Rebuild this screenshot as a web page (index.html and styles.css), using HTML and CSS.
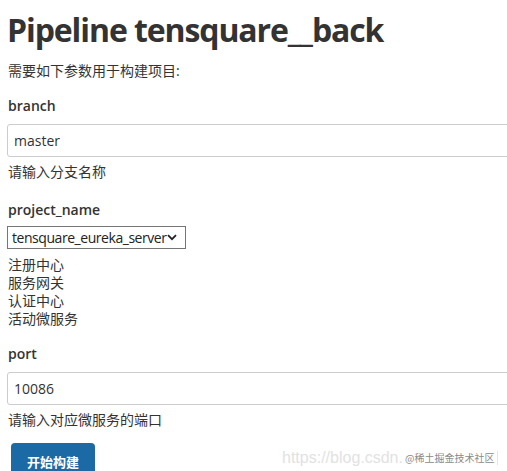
FILE: index.html
```
<!DOCTYPE html>
<html lang="zh">
<head>
<meta charset="utf-8">
<title>Pipeline tensquare__back</title>
<link rel="stylesheet" href="styles.css">
</head>
<body>
<div class="page">
  <h1 class="title">Pipeline tensquare__back</h1>
  <p class="intro">需要如下参数用于构建项目:</p>

  <div class="param">
    <div class="label">branch</div>
    <input class="text-input" type="text" value="master">
    <div class="help">请输入分支名称</div>
  </div>

  <div class="param">
    <div class="label">project_name</div>
    <div class="select-wrap">
      <select class="select">
        <option>tensquare_eureka_server</option>
      </select>
      <svg class="chev" width="10" height="7" viewBox="0 0 10 7"><path d="M1 1.2 L5 5.2 L9 1.2" fill="none" stroke="#222" stroke-width="1.8"/></svg>
    </div>
    <div class="help list">
      <div>注册中心</div>
      <div>服务网关</div>
      <div>认证中心</div>
      <div>活动微服务</div>
    </div>
  </div>

  <div class="param param-last">
    <div class="label">port</div>
    <input class="text-input" type="text" value="10086">
    <div class="help">请输入对应微服务的端口</div>
  </div>

  <button class="build-btn">开始构建</button>
</div>
<div class="watermark"><span class="wm-url">https://blog.csdn.</span><span class="wm-name">@稀土掘金技术社区</span><span class="wm-bar"></span></div>
</body>
</html>
```
FILE: styles.css
```
html, body {
  margin: 0;
  padding: 0;
  overflow: hidden;
  background: #fff;
}
body {
  font-family: "Open Sans", "Noto Sans CJK SC", sans-serif;
  color: #333;
  font-size: 14px;
  line-height: 18px;
  width: 507px;
  height: 471px;
  position: relative;
}
.page {
  padding: 0 0 0 7px;
  display: flex;
  flex-direction: column;
  align-items: flex-start;
}
.title {
  margin: 10px 0 0 0;
  font-size: 32px;
  line-height: 40px;
  font-weight: 700;
  color: #333;
  letter-spacing: -1.1px;
}
.intro {
  margin: 12px 0 0 1px;
}
.param {
  display: flex;
  flex-direction: column;
  align-items: flex-start;
  margin-top: 17px;
  width: 100%;
}
.param + .param {
  margin-top: 20px;
}
.param.param-last {
  margin-top: 17px;
}
.label {
  font-weight: 600;
  margin-left: 1px;
}
.text-input {
  margin-top: 9px;
  box-sizing: border-box;
  width: 540px;
  height: 33px;
  border: 1px solid #ccc;
  border-radius: 3px;
  padding: 0 6px;
  font-family: "Open Sans", sans-serif;
  font-size: 14px;
  color: #333;
  background: #fff;
}
.help {
  margin-top: 6px;
  margin-left: 1px;
}
.select-wrap {
  position: relative;
  margin-top: 7px;
}
.select {
  appearance: none;
  -webkit-appearance: none;
  box-sizing: border-box;
  width: 179px;
  height: 23px;
  border: 1px solid #767676;
  border-radius: 0;
  background: #fff;
  padding: 0 0 0 4px;
  font-family: "Open Sans", sans-serif;
  font-size: 14px;
  letter-spacing: -0.45px;
  color: #222;
  margin: 0;
}
.chev {
  position: absolute;
  right: 9px;
  top: 8px;
  pointer-events: none;
}
.list {
  margin-top: 7px;
}
.build-btn {
  margin: 14px 0 0 4px;
  width: 84px;
  height: 36px;
  border: none;
  border-radius: 4px;
  background: #1b6aa5;
  color: #fff;
  font-family: "Noto Sans CJK SC", sans-serif;
  font-weight: 700;
  font-size: 13px;
  padding: 0;
}
.watermark {
  position: absolute;
  left: 282px;
  top: 449px;
  display: flex;
  align-items: center;
  white-space: nowrap;
}
.wm-url {
  font-family: "Liberation Sans", sans-serif;
  font-size: 16px;
  color: #e2e2e2;
}
.wm-name {
  font-family: "Noto Sans CJK SC", sans-serif;
  font-size: 10px;
  color: #8a8a8a;
  margin-left: 2px;
}
.wm-bar {
  width: 1px;
  height: 14px;
  background: #e6e6e6;
  margin-left: 3px;
}
```
